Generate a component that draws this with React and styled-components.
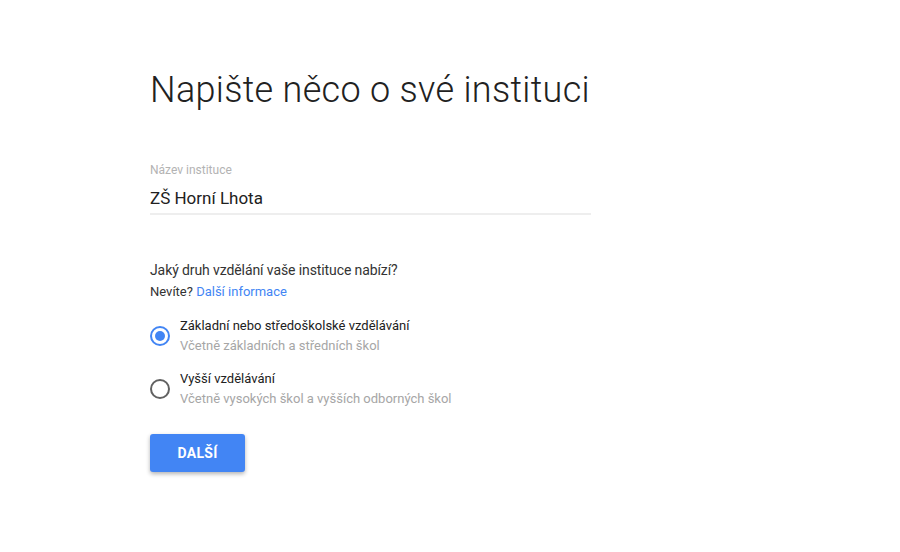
import React, { useState } from "react";
import styled, { createGlobalStyle } from "styled-components";

const Global = createGlobalStyle`
  html, body { margin: 0; padding: 0; background: #fff; }
  body { font-family: Roboto, "Noto Sans", Arial, sans-serif; }
`;

const Page = styled.div`
  width: 900px;
  height: 552px;
  box-sizing: border-box;
  padding: 67px 0 0 150px;
  background: #fff;
`;

const Form = styled.div`
  width: 441px;
  display: flex;
  flex-direction: column;
`;

const Title = styled.h1`
  margin: 0;
  font-weight: 300;
  font-size: 36px;
  line-height: 46px;
  color: #212121;
  letter-spacing: 0.3px;
  white-space: nowrap;
`;

const Field = styled.div`
  margin-top: 49px;
  display: flex;
  flex-direction: column;
  border-bottom: 2px solid #eeeeee;
`;

const FieldLabel = styled.label`
  font-size: 12px;
  line-height: 16px;
  color: #b3b3b3;
`;

const FieldValue = styled.div`
  font-size: 17px;
  line-height: 22px;
  color: #212121;
  padding: 9px 0 4px;
`;

const Question = styled.div`
  margin-top: 45px;
  font-size: 14px;
  letter-spacing: -0.1px;
  line-height: 20px;
  color: #333;
`;

const Hint = styled.div`
  margin-top: 3px;
  font-size: 13px;
  line-height: 18px;
  color: #333;
`;

const Link = styled.a`
  color: #4285f4;
  text-decoration: none;
`;

const Options = styled.div`
  margin-top: 15px;
  display: flex;
  flex-direction: column;
  gap: 13px;
`;

const Option = styled.label`
  display: flex;
  align-items: center;
  gap: 10px;
  cursor: pointer;
`;

const Radio = styled.span`
  box-sizing: border-box;
  width: 20px;
  height: 20px;
  border-radius: 50%;
  border: 2px solid ${(p) => (p.$checked ? "#4285f4" : "#616161")};
  display: flex;
  align-items: center;
  justify-content: center;
  flex: none;
  &::after {
    content: "";
    width: 10px;
    height: 10px;
    border-radius: 50%;
    background: ${(p) => (p.$checked ? "#4285f4" : "transparent")};
  }
`;

const OptionText = styled.div`
  display: flex;
  flex-direction: column;
`;

const OptionTitle = styled.div`
  font-size: 13px;
  line-height: 20px;
  color: #212121;
`;

const OptionSub = styled.div`
  font-size: 13px;
  line-height: 20px;
  color: #a6a6a6;
`;

const Button = styled.button`
  margin-top: 25px;
  align-self: flex-start;
  width: 95px;
  height: 38px;
  border: none;
  border-radius: 3px;
  background: #4285f4;
  color: #fff;
  font-family: Roboto, Arial, sans-serif;
  font-weight: 700;
  font-size: 14px;
  letter-spacing: 0.3px;
  box-shadow: 0 2px 4px rgba(0, 0, 0, 0.3);
  cursor: pointer;
`;

const options = [
  { title: "Základní nebo středoškolské vzdělávání", sub: "Včetně základních a středních škol" },
  { title: "Vyšší vzdělávání", sub: "Včetně vysokých škol a vyšších odborných škol" },
];

export default function App() {
  const [sel, setSel] = useState(0);
  return (
    <>
      <Global />
      <Page>
        <Form>
          <Title>Napište něco o své instituci</Title>
          <Field>
            <FieldLabel>Název instituce</FieldLabel>
            <FieldValue>ZŠ Horní Lhota</FieldValue>
          </Field>
          <Question>Jaký druh vzdělání vaše instituce nabízí?</Question>
          <Hint>
            Nevíte? <Link href="#">Další informace</Link>
          </Hint>
          <Options>
            {options.map((o, i) => (
              <Option key={i} onClick={() => setSel(i)}>
                <Radio $checked={sel === i} />
                <OptionText>
                  <OptionTitle>{o.title}</OptionTitle>
                  <OptionSub>{o.sub}</OptionSub>
                </OptionText>
              </Option>
            ))}
          </Options>
          <Button>DALŠÍ</Button>
        </Form>
      </Page>
    </>
  );
}
